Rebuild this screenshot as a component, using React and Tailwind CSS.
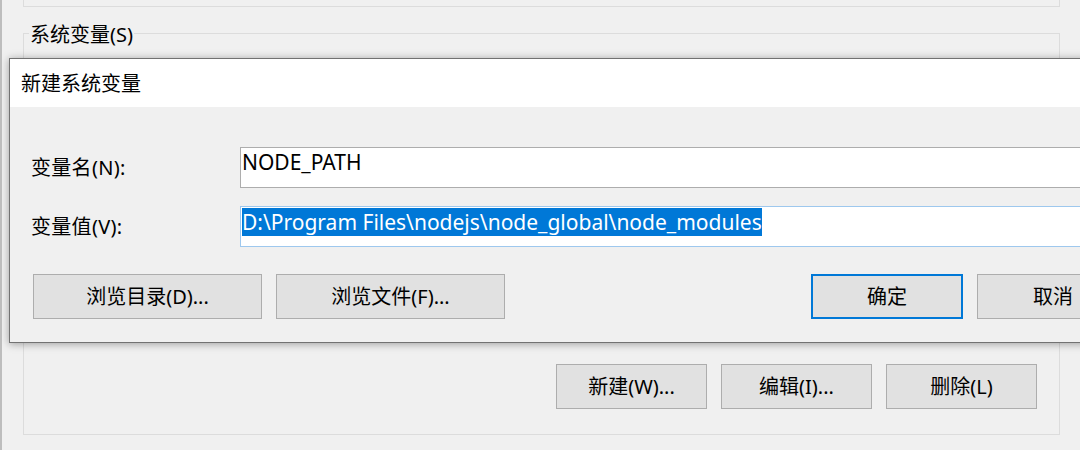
import React from 'react';

const WinButton = ({ children, className = '', focused = false }) => (
  <button
    className={`h-[45px] bg-[#e1e1e1] text-[20px] leading-[28px] text-black ${
      focused ? 'border-2 border-[#0078d7]' : 'border border-[#adadad]'
    } ${className}`}
  >
    {children}
  </button>
);

const App = () => {
  return (
    <div className="relative w-[1080px] h-[450px] overflow-hidden bg-[#f0f0f0] border-l-2 border-[#bdbdbd] font-['Noto_Sans','Noto_Sans_CJK_SC',sans-serif] text-black">
      {/* user variables group (only its bottom edge is visible) */}
      <div className="ml-[21px] w-[1037px] h-[7px] border-x border-b border-[#dcdcdc]"></div>

      {/* system variables group */}
      <div className="relative ml-[21px] mt-[26px] w-[1037px] h-[402px] border border-[#dcdcdc] flex flex-col justify-end items-end pr-[22px] pb-[25px]">
        <span className="absolute left-[5px] -top-[13px] px-[1px] bg-[#f0f0f0] text-[20px] leading-[28px]">
          系统变量(S)
        </span>
        <div className="flex gap-[14px]">
          <WinButton className="w-[151px]">新建(W)...</WinButton>
          <WinButton className="w-[151px]">编辑(I)...</WinButton>
          <WinButton className="w-[151px]">删除(L)</WinButton>
        </div>
      </div>

      {/* New system variable dialog */}
      <div className="absolute left-[7px] top-[58px] w-[1160px] h-[285px] border border-[#727272] bg-[#f0f0f0] shadow-[0_1px_8px_rgba(0,0,0,0.35)] flex flex-col">
        <div className="h-[48px] bg-white flex items-center pl-[11px] pt-[1px] text-[20px] leading-[28px]">
          新建系统变量
        </div>

        <div className="flex flex-col pr-[38px]">
          <div className="mt-[40px] flex items-center pl-[21px]">
            <label className="w-[209px] text-[20px] leading-[28px] pt-[1px] tracking-[0.3px]">变量名(N):</label>
            <div className="flex-1 h-[41px] border border-[#adadad] bg-white pl-[1px] text-[21px] leading-[28px]">
              NODE_PATH
            </div>
          </div>

          <div className="mt-[18px] flex items-center pl-[21px]">
            <label className="w-[209px] text-[20px] leading-[28px] pt-[1px] tracking-[0.3px]">变量值(V):</label>
            <div className="flex-1 h-[41px] border border-[#9ec8ee] bg-white pl-[1px] pt-[1px] text-[21px] leading-[28px]">
              <span className="bg-[#0078d7] text-white">D:\Program Files\nodejs\node_global\node_modules</span>
            </div>
          </div>

          <div className="mt-[27px] flex items-center pl-[23px] pr-[1px]">
            <div className="flex gap-[14px]">
              <WinButton className="w-[229px]">浏览目录(D)...</WinButton>
              <WinButton className="w-[229px]">浏览文件(F)...</WinButton>
            </div>
            <div className="ml-auto flex gap-[14px]">
              <WinButton className="w-[152px]" focused>确定</WinButton>
              <WinButton className="w-[152px]">取消</WinButton>
            </div>
          </div>
        </div>
      </div>
    </div>
  );
};

export default App;
